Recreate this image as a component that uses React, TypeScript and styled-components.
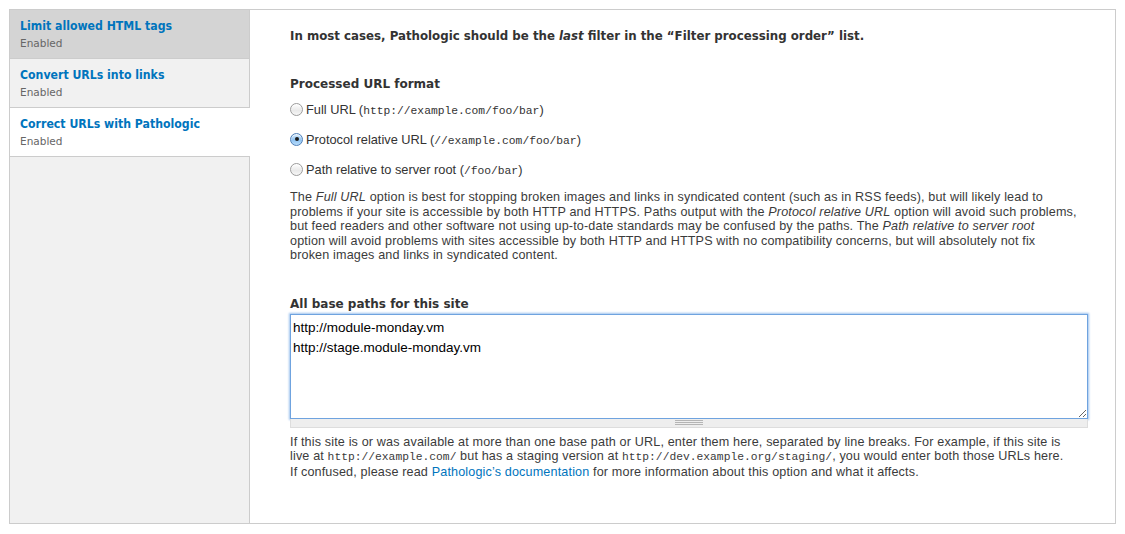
import React, { useEffect, useRef } from "react";
import styled, { createGlobalStyle } from "styled-components";

const Global = createGlobalStyle`
  html, body { margin: 0; padding: 0; background: #fff; }
  body { font-family: "DejaVu Sans", "Liberation Sans", sans-serif; color: #333; }
  * { box-sizing: border-box; }
`;

const Frame = styled.div`
  margin: 9px 9px 0 9px;
  height: 515px;
  border: 1px solid #ccc;
  display: flex;
`;

const Sidebar = styled.ul`
  list-style: none;
  margin: 0;
  padding: 0;
  width: 240px;
  flex: none;
  background: #f1f1f1;
  border-right: 1px solid #ccc;
`;

const Tab = styled.li<{ $state: "hover" | "normal" | "active" }>`
  height: 49px;
  padding: 7px 10px 8px 10px;
  border-bottom: 1px solid #ccc;
  background: ${(p) => (p.$state === "hover" ? "#d4d4d4" : p.$state === "active" ? "#fff" : "#f1f1f1")};
  margin-right: ${(p) => (p.$state === "active" ? "-1px" : "0")};
  position: relative;
`;

const TabTitle = styled.a`
  display: block;
  font-family: "DejaVu Sans Condensed", "DejaVu Sans", sans-serif;
  font-weight: bold;
  font-size: 12.2px;
  line-height: 18px;
  color: #0074bd;
  text-decoration: none;
`;

const TabSummary = styled.span`
  display: block;
  font-family: "DejaVu Sans", sans-serif;
  font-size: 10.5px;
  line-height: 16px;
  color: #666;
`;

const Pane = styled.div`
  flex: 1;
  padding: 17px 27px 0 40px;
`;

const Heading = styled.div<{ $mt: number; $size?: number }>`
  font-family: "DejaVu Sans", sans-serif;
  font-weight: bold;
  font-size: ${(p) => p.$size ?? 12}px;
  line-height: 18px;
  color: #333;
  margin-top: ${(p) => p.$mt}px;
`;

const RadioList = styled.div`
  margin-top: 6px;
  display: flex;
  flex-direction: column;
  gap: 10px;
`;

const RadioRow = styled.label`
  display: flex;
  align-items: center;
  height: 20px;
  gap: 3px;
  font-family: "Liberation Sans", Arial, sans-serif;
  font-size: 12.8px;
  color: #333;
`;

const RadioDot = styled.span<{ $checked?: boolean }>`
  width: 13px;
  height: 13px;
  border-radius: 50%;
  flex: none;
  position: relative;
  border: 1px solid ${(p) => (p.$checked ? "#4f7fb8" : "#9c9c9c")};
  background: ${(p) =>
    p.$checked
      ? "linear-gradient(#d7ebfc, #8fc3f2 55%, #b8dcfb)"
      : "linear-gradient(#ffffff, #e9e9e9 60%, #f6f6f6)"};
  box-shadow: inset 0 1px 1px rgba(255,255,255,0.8);
  &::after {
    content: "";
    display: ${(p) => (p.$checked ? "block" : "none")};
    position: absolute;
    left: 3.5px;
    top: 3.5px;
    width: 4px;
    height: 4px;
    border-radius: 50%;
    background: #1a1a1a;
  }
`;

const Code = styled.code`
  font-family: "Liberation Mono", "DejaVu Sans Mono", monospace;
  font-size: 11.3px;
  letter-spacing: 0;
`;

const Description = styled.p<{ $mt: number }>`
  margin: ${(p) => p.$mt}px 0 0 0;
  font-family: "Liberation Sans", Arial, sans-serif;
  font-size: 12.6px;
  letter-spacing: 0.15px;
  line-height: 14.5px;
  color: #3b3b3b;
`;

const Link = styled.a`
  color: #0074bd;
  text-decoration: none;
`;

const TextArea = styled.textarea`
  display: block;
  width: 100%;
  height: 105px;
  margin: 1px 0 0 0;
  padding: 3px 2px;
  border: 1px solid #6fa3df;
  box-shadow: 0 0 2px 1px #9ec3ee;
  border-radius: 0;
  outline: none;
  resize: vertical;
  font-family: "Liberation Sans", Arial, sans-serif;
  font-size: 13.5px;
  line-height: 20px;
  color: #000;
  caret-color: #000;
`;

const Grippie = styled.div`
  height: 9px;
  border: 1px solid #ddd;
  border-top: none;
  background: #eee;
  display: flex;
  justify-content: center;
  align-items: center;
`;

const GripLines = styled.span`
  width: 28px;
  height: 5px;
  border-top: 1px solid #b5b5b5;
  border-bottom: 1px solid #b5b5b5;
  position: relative;
  &::after {
    content: "";
    position: absolute;
    left: 0;
    right: 0;
    top: 1px;
    border-top: 1px solid #b5b5b5;
  }
`;

const PATHS = "http://module-monday.vm\nhttp://stage.module-monday.vm";

export default function App() {
  const ta = useRef<HTMLTextAreaElement>(null);
  useEffect(() => {
    const el = ta.current;
    if (el) {
      el.focus();
      el.setSelectionRange(PATHS.length, PATHS.length);
    }
  }, []);
  return (
    <>
      <Global />
      <Frame>
        <Sidebar>
          <Tab $state="hover">
            <TabTitle href="#">Limit allowed HTML tags</TabTitle>
            <TabSummary>Enabled</TabSummary>
          </Tab>
          <Tab $state="normal">
            <TabTitle href="#">Convert URLs into links</TabTitle>
            <TabSummary>Enabled</TabSummary>
          </Tab>
          <Tab $state="active">
            <TabTitle href="#">Correct URLs with Pathologic</TabTitle>
            <TabSummary>Enabled</TabSummary>
          </Tab>
        </Sidebar>
        <Pane>
          <Heading $mt={0} $size={11.8}>
            In most cases, Pathologic should be the <em>last</em> filter in the “Filter processing order” list.
          </Heading>
          <Heading $mt={30}>Processed URL format</Heading>
          <RadioList>
            <RadioRow>
              <RadioDot />
              <span>
                Full URL (<Code>http://example.com/foo/bar</Code>)
              </span>
            </RadioRow>
            <RadioRow>
              <RadioDot $checked />
              <span>
                Protocol relative URL (<Code>//example.com/foo/bar</Code>)
              </span>
            </RadioRow>
            <RadioRow>
              <RadioDot />
              <span>
                Path relative to server root (<Code>/foo/bar</Code>)
              </span>
            </RadioRow>
          </RadioList>
          <Description $mt={11}>
            The <em>Full URL</em> option is best for stopping broken images and links in syndicated content (such as in
            RSS feeds), but will likely lead to
            <br />
            problems if your site is accessible by both HTTP and HTTPS. Paths output with the{" "}
            <em>Protocol relative URL</em> option will avoid such problems,
            <br />
            but feed readers and other software not using up-to-date standards may be confused by the paths. The{" "}
            <em>Path relative to server root</em>
            <br />
            option will avoid problems with sites accessible by both HTTP and HTTPS with no compatibility concerns, but
            will absolutely not fix
            <br />
            broken images and links in syndicated content.
          </Description>
          <Heading $mt={32}>All base paths for this site</Heading>
          <TextArea ref={ta} defaultValue={PATHS} spellCheck={false} />
          <Grippie>
            <GripLines />
          </Grippie>
          <Description $mt={7}>
            If this site is or was available at more than one base path or URL, enter them here, separated by line
            breaks. For example, if this site is
            <br />
            live at <Code>http://example.com/</Code> but has a staging version at{" "}
            <Code>http://dev.example.org/staging/</Code>, you would enter both those URLs here.
            <br />
            If confused, please read <Link href="#">Pathologic’s documentation</Link> for more information about this
            option and what it affects.
          </Description>
        </Pane>
      </Frame>
    </>
  );
}
